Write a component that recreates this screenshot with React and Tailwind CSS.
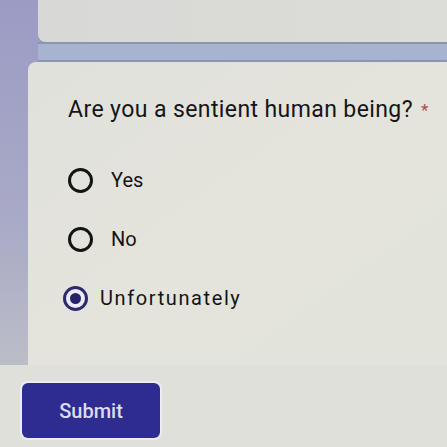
const OPTIONS = [
  { label: "Yes", checked: false },
  { label: "No", checked: false },
  { label: "Unfortunately", checked: true },
];

export default function App() {
  return (
    <div
      className="w-[447px] h-[447px] overflow-hidden flex flex-col bg-gradient-to-b from-[#9c9bc5] via-[#a9aac6] to-[#c6c8c8]"
      style={{ fontFamily: "Roboto, 'Liberation Sans', sans-serif" }}
    >
      {/* previous card */}
      <div className="ml-[38px] h-[42px] shrink-0 bg-gradient-to-r from-[#d8d9d6] to-[#dcdcd8] rounded-bl-lg" />

      {/* gap */}
      <div className="ml-[38px] h-[20px] shrink-0 bg-[#a7b4cf] border-y-2 border-[#5f6780]/40" />

      {/* question card */}
      <div className="ml-[28px] h-[303px] shrink-0 bg-gradient-to-br from-[#e1e1dc] via-[#e4e4dc] to-[#e2e3da] rounded-tl-lg pl-[40px] pt-[33px]">
        <h2 className="text-[23px] text-[#141518] leading-[30px] tracking-[0.4px]">
          Are you a sentient human being?
          <span className="text-[#b04a4a] ml-[8px] text-[17px] align-top">*</span>
        </h2>

        <div className="mt-[43px] flex flex-col gap-[35px]">
          {OPTIONS.map((o, i) => (
            <Option key={i} {...o} />
          ))}
        </div>
      </div>

      {/* footer */}
      <div className="flex-1 bg-[#dfe0d9] pt-[18px] pl-[22px]">
        <button className="w-[138px] h-[55px] rounded-md bg-[#2e2c8e] text-[#dcdcf2] text-[20px] font-medium shadow-[0_0_0_2px_#ececf4]">
          Submit
        </button>
      </div>
    </div>
  );
}

function Option({ label, checked }) {
  return (
    <div className={`flex items-center h-[24px] ${checked ? "-ml-[5px]" : ""}`}>
      <span
        className={`w-[25px] h-[25px] rounded-full border-[3px] flex items-center justify-center shrink-0 ${
          checked ? "border-[#2c2a6e] bg-[#ecebf5]" : "border-[#141414]"
        }`}
      >
        {checked && <span className="w-[11px] h-[11px] rounded-full bg-[#24236a]" />}
      </span>
      <span
        className={`text-[20px] text-[#141414] ${
          checked ? "ml-[12px] tracking-[1.6px]" : "ml-[18px]"
        }`}
      >
        {label}
      </span>
    </div>
  );
}
